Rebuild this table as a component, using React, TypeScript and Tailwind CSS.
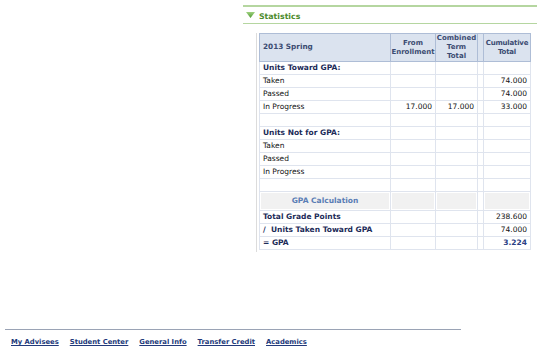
import React from "react";

type Row = { label: string; enr?: string; comb?: string; cum?: string; bold?: boolean };

const towardRows: Row[] = [
  { label: "Units Toward GPA:", bold: true },
  { label: "Taken", cum: "74.000" },
  { label: "Passed", cum: "74.000" },
  { label: "In Progress", enr: "17.000", comb: "17.000", cum: "33.000" },
  { label: "" },
  { label: "Units Not for GPA:", bold: true },
  { label: "Taken" },
  { label: "Passed" },
  { label: "In Progress" },
  { label: "" },
];

const gpaRows: Row[] = [
  { label: "Total Grade Points", cum: "238.600", bold: true },
  { label: "/  Units Taken Toward GPA", cum: "74.000", bold: true },
  { label: "= GPA", cum: "3.224", bold: true },
];

const links = ["My Advisees", "Student Center", "General Info", "Transfer Credit", "Academics"];

const td = "border border-[#dfe4ee] h-[13px] px-[3px] py-0 leading-[12px] align-middle";

function BodyRow({ r, gpa }: { r: Row; gpa?: boolean }) {
  return (
    <tr>
      <td className={`${td} text-left ${r.bold ? "font-bold text-[#1c2b58]" : "text-[#111]"} whitespace-pre`}>{r.label}</td>
      <td className={`${td} text-right text-[#111]`}>{r.enr}</td>
      <td className={`${td} text-right text-[#111]`}>{r.comb}</td>
      <td className={`${td}`}></td>
      <td className={`${td} text-right ${gpa && r.label === "= GPA" ? "font-bold text-[#2b3f85]" : "text-[#111]"}`}>{r.cum}</td>
    </tr>
  );
}

export default function App() {
  return (
    <div className="w-[540px] h-[348px] bg-white overflow-hidden font-['DejaVu_Sans',Verdana,sans-serif] text-[7.5px]">
      <div className="ml-[243px] w-[294px] pt-[5px]">
        <div className="border-t-2 border-b border-[#b5d6a0] h-[19px] flex items-center gap-[4px] pl-[3px] pt-[3px]">
          <svg width="9" height="7" viewBox="0 0 9 7" className="mt-[-3px]">
            <defs>
              <linearGradient id="tri" x1="0" y1="0" x2="0" y2="1">
                <stop offset="0%" stopColor="#9fd17f" />
                <stop offset="100%" stopColor="#4f9a32" />
              </linearGradient>
            </defs>
            <polygon points="0,0 9,0 4.5,6" fill="url(#tri)" />
          </svg>
          <span className="font-bold text-[7.8px] text-[#4c8a2c]">Statistics</span>
        </div>
        <div className="ml-[13px] mt-[9px] border-l border-[#dcdcdc] pl-[2px] pb-[2px] w-[274px]">
          <table className="border-collapse w-[271px] table-fixed">
            <colgroup>
              <col className="w-[131px]" />
              <col className="w-[45px]" />
              <col className="w-[42px]" />
              <col className="w-[6px]" />
              <col className="w-[47px]" />
            </colgroup>
            <thead>
              <tr className="bg-[#dbe3ef] text-[#3b4c72] font-bold text-[7px]">
                <th className="border border-[#aebdd6] h-[28px] px-[3px] text-left align-middle text-[7.3px]">2013 Spring</th>
                <th className="border border-[#aebdd6] px-0 text-center leading-[9px] align-middle">From<br />Enrollment</th>
                <th className="border border-[#aebdd6] px-0 text-center leading-[9px] align-middle">Combined<br />Term<br />Total</th>
                <th className="border border-[#aebdd6]"></th>
                <th className="border border-[#aebdd6] px-0 text-center leading-[9px] align-middle tracking-[-0.2px]">Cumulative<br />Total</th>
              </tr>
            </thead>
            <tbody>
              {towardRows.map((r, i) => (
                <BodyRow key={i} r={r} />
              ))}
              <tr>
                <td className="border border-[#dfe4ee] h-[19px] p-[1px]">
                  <div className="bg-[#f1f1f1] h-[16px] flex items-center justify-center font-bold text-[#5a7db5]">GPA Calculation</div>
                </td>
                <td className="border border-[#dfe4ee] p-[1px]"><div className="bg-[#f1f1f1] h-[16px]" /></td>
                <td className="border border-[#dfe4ee] p-[1px]"><div className="bg-[#f1f1f1] h-[16px]" /></td>
                <td className="border border-[#dfe4ee] p-0"></td>
                <td className="border border-[#dfe4ee] p-[1px]"><div className="bg-[#f1f1f1] h-[16px]" /></td>
              </tr>
              {gpaRows.map((r, i) => (
                <BodyRow key={i} r={r} gpa />
              ))}
            </tbody>
          </table>
        </div>
      </div>
      <div className="mt-[77px] ml-[5px] w-[456px] border-t border-[#9aa3b5]"></div>
      <div className="flex gap-[11px] ml-[11px] mt-[7px]">
        {links.map((l) => (
          <a key={l} href="#" className="font-bold text-[6.8px] text-[#22397a] underline">
            {l}
          </a>
        ))}
      </div>
    </div>
  );
}
